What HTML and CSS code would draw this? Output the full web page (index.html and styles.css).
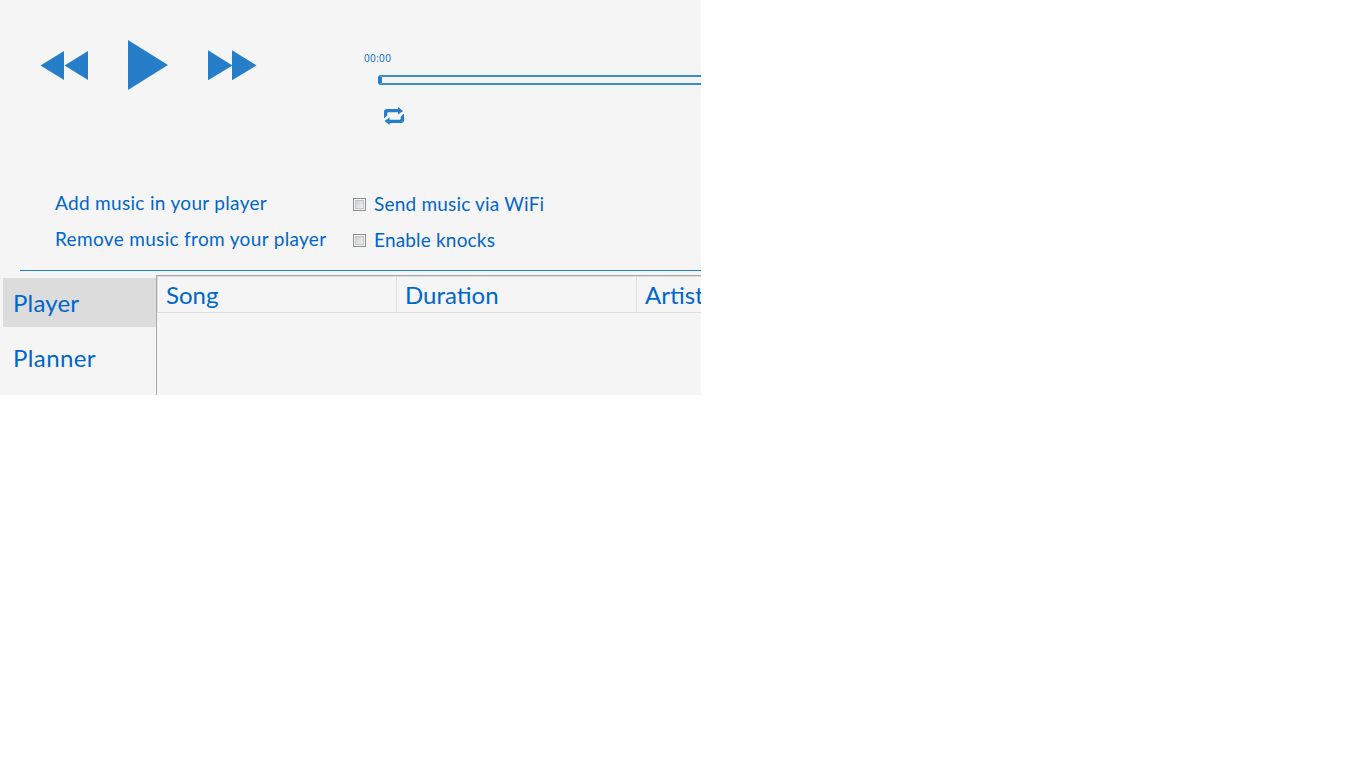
FILE: index.html
```
<!DOCTYPE html>
<html lang="en">
<head>
<meta charset="utf-8">
<title>Music player</title>
<link rel="stylesheet" href="styles.css">
</head>
<body>
<main class="window">
  <section class="top">
    <div class="controls">
      <svg class="prev" width="48" height="30" viewBox="0 0 48 30"><path d="M.5 15.500 24 1V30ZM24.500 15.500 48 1V30Z"/></svg>
      <svg class="play" width="40" height="50" viewBox="0 0 40 50"><path d="M0 0 40 25 0 50Z"/></svg>
      <svg class="next" width="49" height="30" viewBox="0 0 49 30"><path d="M0 0.200 24.500 15.400 0 30.300ZM24 0.200 48.500 15.400 24 30.300Z"/></svg>
    </div>
    <div class="progress">
      <div class="time">00:00</div>
      <div class="track"></div>
      <svg class="repeat" width="22" height="18" viewBox="0 0 22 18"><path d="M1 11.500V5Q1 2 4 2H15V0L20 4 15 7.500V5.200H5.500Q4.300 5.200 4.300 6.500V8.500ZM21 6.500V13Q21 16 18 16H6.500V18L1.500 14 6.500 10.500V12.800H16.500Q17.700 12.800 17.700 11.500V9.500Z"/></svg>
    </div>
  </section>
  <section class="options">
    <div class="links">
      <div class="line"><span class="add">Add music in your player</span></div>
      <div class="line"><span class="remove">Remove music from your player</span></div>
    </div>
    <div class="checks">
      <div class="line"><i class="box"></i><span class="send">Send music via WiFi</span></div>
      <div class="line"><i class="box"></i><span class="knocks">Enable knocks</span></div>
    </div>
  </section>
  <div class="rule"></div>
  <section class="lower">
    <nav class="tabs">
      <div class="tab active"><span class="t-player">Player</span></div>
      <div class="tab"><span class="t-planner">Planner</span></div>
    </nav>
    <div class="table">
      <div class="head">
        <div class="cell">Song</div>
        <div class="cell">Duration</div>
        <div class="cell">Artist</div>
      </div>
    </div>
  </section>
</main>
</body>
</html>
```
FILE: styles.css
```
* { box-sizing: border-box; }
body { margin: 0; background: #fff; font-family: Lato, "Open Sans", sans-serif; color: #0066cc; }
.window { width: 701px; height: 395px; overflow: hidden; background: #f5f5f5; display: flex; flex-direction: column; }
svg { display: block; fill: #267ec8; }
.top { display: flex; height: 185px; flex: none; }
.controls { display: flex; align-items: flex-start; width: 364px; padding: 40px 0 0 40px; flex: none; }
.prev { margin-top: 10px; }
.play { margin-left: 40px; }
.next { margin: 10px 0 0 40px; }
.progress { flex: 1; padding-top: 51px; }
.time { font: 10px/14px "Open Sans", sans-serif; letter-spacing: 0.35px; height: 24px; }
.track { height: 10px; margin-left: 14px; border: 2px solid #3a8acd; border-left: 4px solid #267ec8; border-right: 0; border-radius: 3px 0 0 3px; }
.repeat { margin: 22px 0 0 19px; }
.options { display: flex; height: 85px; flex: none; font-size: 19px; line-height: 36px; white-space: nowrap; }
.links { width: 353px; padding-left: 55px; }
.checks { padding-top: 1px; }
.line { height: 36px; display: flex; align-items: center; }
.add { letter-spacing: 0.32px; }
.remove { letter-spacing: 0.33px; }
.send { letter-spacing: 0.2px; }
.knocks { letter-spacing: 0.18px; }
.box { width: 13px; height: 13px; margin-right: 8px; border: 1px solid #8e8f8f; background: linear-gradient(135deg, #c6cacf, #f6f6f6) content-box, #f4f4f4; padding: 1px; outline: 1px solid #c3c6c9; outline-offset: -3px; }
.rule { height: 1px; margin-left: 20px; background: #267ec8; flex: none; }
.lower { display: flex; flex: 1; padding-top: 4px; font-size: 24px; }
.tabs { width: 156px; padding: 3px 0 0 3px; flex: none; }
.tab { height: 49px; padding-left: 10px; line-height: 49px; margin-bottom: 6px; }
.t-player { letter-spacing: 0.2px; }
.t-planner { letter-spacing: 0.4px; }
.active { background: #dcdcdc; }
.table { flex: 1; min-width: 0; border-left: 1px solid #a8abad; border-top: 1px solid #a8abad; }
.head { display: flex; height: 37px; border-top: 1px solid #dcdcdc; border-bottom: 1px solid #dcdcdc; border-left: 1px solid #dcdcdc; }
.cell { width: 239px; padding-left: 8px; line-height: 36px; border-right: 1px solid #dcdcdc; flex: none; }
.cell + .cell { width: 240px; }
```
